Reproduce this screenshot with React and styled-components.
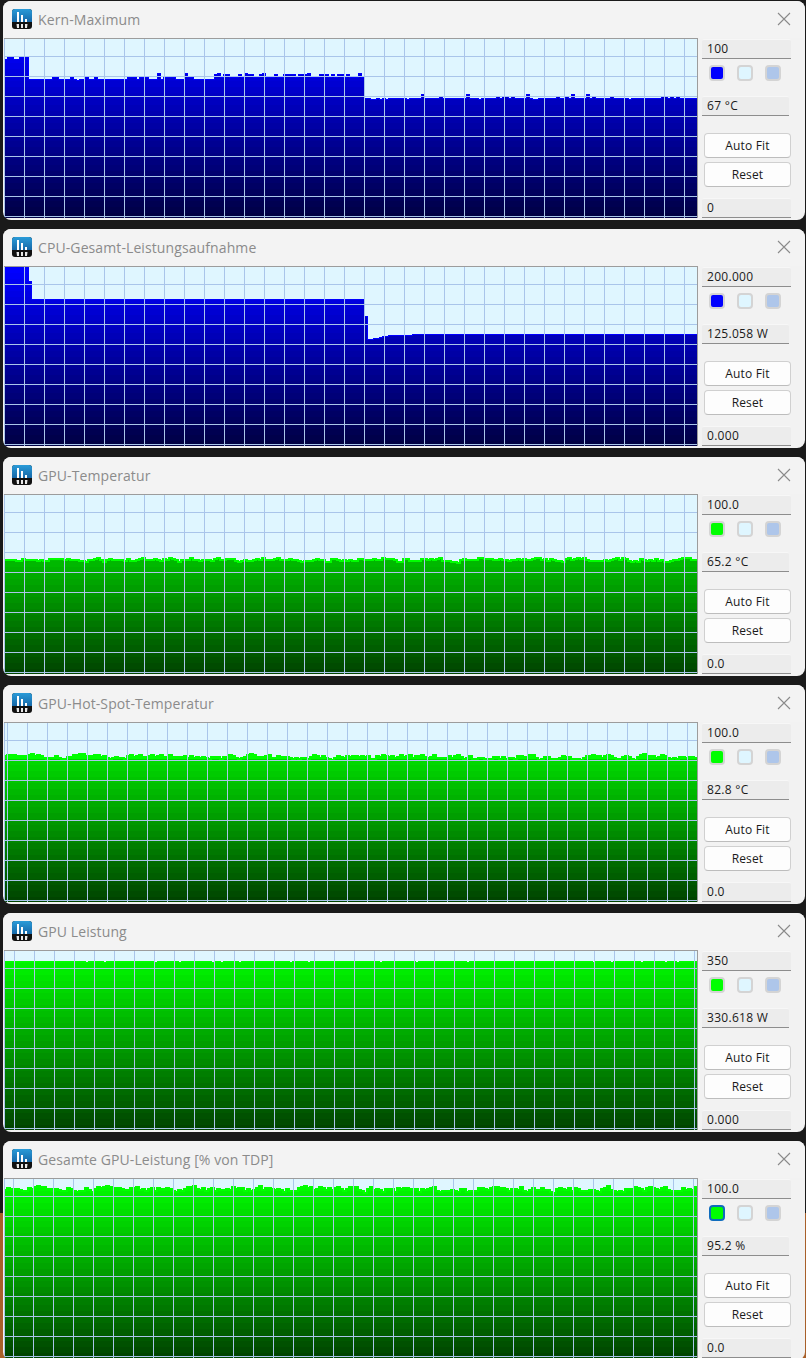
import React from 'react';
import styled, { createGlobalStyle } from 'styled-components';

const Global = createGlobalStyle`
  html, body { margin: 0; padding: 0; }
  body {
    width: 806px; height: 1358px; overflow: hidden;
    background: linear-gradient(#1a1a1a 1213px, #a8602a 1213px);
    font-family: "Open Sans", "Noto Sans", sans-serif;
  }
`;
const Page = styled.div`
  height: 1358px; overflow: hidden; padding: 1px 1px 0 3px; box-sizing: border-box;
  display: flex; flex-direction: column; gap: 9px;
`;
const Win = styled.section`
  flex: 0 0 219px; height: 219px; box-sizing: border-box; background: #f2f2f2;
  border-radius: 8px; overflow: hidden; display: flex; flex-direction: column;
`;
const TitleBar = styled.header`
  height: 37px; flex: 0 0 37px; box-sizing: border-box; background: #f3f3f3; display: flex; align-items: center;
  padding: 0 14px 1px 9px; gap: 6px;
`;
const Title = styled.h1`
  flex: 1; margin: 0; font-weight: 400; font-size: 14px; letter-spacing: 0.1px; color: #8b8b8b; white-space: nowrap;
`;
const Body = styled.div`display: flex; flex: 1; min-height: 0; align-items: flex-start;`;
const Plot = styled.div`
  width: 694px; height: 180px; box-sizing: border-box; background: #dff6ff; margin-left: 1px;
  border-top: 1px solid #9c9c9c; border-right: 1px solid #9c9c9c; flex: none;
  svg { display: block; }
`;
const Side = styled.aside`
  width: 90px; margin-left: 4px; display: flex; flex-direction: column; align-items: flex-start;
`;
const Field = styled.div`
  box-sizing: border-box; height: 20px; width: ${p => p.$w}px; margin-top: ${p => p.$mt || 0}px;
  background: #ececec; border-top: 1px solid #f7f7f7; border-bottom: 1px solid #8d8d8d;
  border-radius: 2px 2px 0 0; padding-left: 5px; line-height: 18px;
  font-size: 12px; letter-spacing: 0.3px; color: #1a1a1a; white-space: nowrap;
`;
const Swatches = styled.div`display: flex; gap: 12px; margin: 6px 0 0 7px;`;
const Swatch = styled.div`
  width: 16px; height: 16px; box-sizing: border-box; border-radius: 4px; background: ${p => p.$c};
  border: 2px solid ${p => p.$focus ? '#0f6cbd' : '#d4d4d4'};
`;
const Btn = styled.button`
  display: block; width: 87px; height: 25px; margin: ${p => p.$mt}px 0 0 2px; padding: 0;
  box-sizing: border-box; background: #fdfdfd; border: 1px solid #d0d0d0; border-bottom-color: #bdbdbd;
  border-radius: 4px; font: 400 12px "Open Sans", "Noto Sans", sans-serif; letter-spacing: 0.15px; color: #1a1a1a;
`;

const rng = seed => () => {
  seed |= 0; seed = (seed + 0x6d2b79f5) | 0;
  let t = Math.imul(seed ^ (seed >>> 15), 1 | seed);
  t = (t + Math.imul(t ^ (t >>> 7), 61 | t)) ^ t;
  return ((t ^ (t >>> 14)) >>> 0) / 4294967296;
};
const W = 693;
const H = 178;
const xs = []; for (let x = 0; x < W; x += 3) xs.push(x);
const near = (list, x) => list.some(v => x + 4 >= v && x + 4 < v + 3);

const bump1a = [52, 55, 70, 85, 94, 127, 130, 133, 139, 142, 145, 163, 166, 169, 172, 187, 190];
const spike1a = [157, 182];
const high1b = [214, 223, 226, 236, 245, 248, 258, 272, 283, 286, 289, 292, 297, 300, 303, 317, 320, 323, 329, 337, 340, 346];
const spike1b = [217, 243, 260, 305, 357];
const series = {
  kern: x => {
    const a = x + 4;
    if (a < 28) return near([4, 13, 16], x) ? 20 : 18;
    if (a < 213) { if (near(spike1a, x)) return 34; if (near(bump1a, x)) return 38; if (near([70, 76], x)) return 41; return 40; }
    if (a < 364) { if (near(spike1b, x)) return 34; if (near(high1b, x)) return 35; return 38; }
    if (near([419, 464, 524, 569, 584], x)) return 55;
    if (near([437, 494, 500, 503, 509, 554, 563, 590, 608, 660, 663, 668, 674], x)) return 57;
    if (near([370, 373, 378, 383, 404, 477, 532, 535, 626], x)) return 60;
    return 59;
  },
  cpu: x => {
    const a = x + 4;
    if (a < 27) return 0;
    if (a < 31) return 14;
    if (a < 364) return 32;
    if (a < 367) return 49;
    if (a < 373) return 72;
    if (a < 379) return 71;
    if (a < 382) return 70;
    if (a < 388) return 69;
    if (a < 412) return 68;
    return 67;
  },
};
const noisy = (seed, lo, hi) => {
  const r = rng(seed); const m = {};
  let cur = (lo + hi) / 2;
  xs.forEach(x => {
    cur = cur * 0.45 + (lo + r() * (hi - lo)) * 0.55;
    m[x] = Math.round(cur);
  });
  return x => m[x];
};
series.gpuT = noisy(11, 61, 67);
series.hot = noisy(29, 29, 37);
series.pow = (() => { const r = rng(5); const m = {}; xs.forEach(x => { m[x] = r() > 0.93 ? 11 : 10; }); return x => m[x]; })();
series.tdp = noisy(47, 5, 14);

function Chart({ id, kind, fn, offset, solidTo = 0, strokeW = 1 }) {
  const top = kind === 'blue' ? c => `rgb(0,0,${c})` : c => `rgb(0,${c},0)`;
  const bands = [];
  for (let y = 0; y < H; y += 6) {
    const c = y < solidTo ? 255 : Math.round(255 - (191 * y) / H);
    bands.push([y, c]);
  }
  const pts = xs.map(x => [x, fn(x)]);
  let line = '';
  pts.forEach(([x, y], i) => { line += i === 0 ? `M0 ${y}` : ` V${y}`; line += ` H${Math.min(x + 3, W)}`; });
  const fill = `${line} V${H + 1} H0 Z`;
  let grid = '';
  for (let x = offset; x < W; x += 20) grid += `M${x + 0.5} 0V${H + 1}`;
  for (let y = 17; y < H + 1; y += 20) grid += `M0 ${y + 0.5}H${W}`;
  grid += 'M0.5 0V179';
  const color = kind === 'blue' ? '#0000ff' : '#00ff00';
  return (
    <svg width={W} height={H + 1} viewBox={`0 0 ${W} ${H + 1}`} shapeRendering="crispEdges">
      <defs>
        <clipPath id={id}><path d={fill} /></clipPath>
      </defs>
      <g clipPath={`url(#${id})`}>
        {bands.map(([y, c]) => <rect key={y} x="0" y={y} width={W} height="6" fill={top(c)} />)}
      </g>
      <path d={line} transform="translate(0 0.5)" fill="none" stroke={color} strokeWidth={strokeW} />
      <path d={grid} fill="none" stroke="#a9c5ea" strokeWidth="1" />
    </svg>
  );
}

const AppIcon = () => (
  <svg width="20" height="20" viewBox="0 0 20 20" style={{ flex: 'none' }}>
    <defs>
      <linearGradient id="ico" x1="0" y1="0" x2="0" y2="1">
        <stop offset="0" stopColor="#2a9bd8" /><stop offset="1" stopColor="#1668a8" />
      </linearGradient>
    </defs>
    <rect width="20" height="20" rx="3" fill="#111" />
    <path d="M3 0h14a3 3 0 0 1 3 3v10H0V3a3 3 0 0 1 3-3z" fill="url(#ico)" />
    <path d="M5 3h2v10H5zM9 6h2v7H9zM13 10h2v3h-2z" fill="#fff" />
    <path d="M4.500 15h2.500v4H5zM9 15h2v4H9zM13 15h2.500l-.5 4h-2z" fill="#e8e8e8" />
  </svg>
);
const CloseIcon = () => (
  <svg width="14" height="14" viewBox="0 0 14 14" style={{ flex: 'none' }}>
    <path d="M1 1l12 12M13 1L1 13" stroke="#8a8a8a" strokeWidth="1.1" fill="none" />
  </svg>
);

const windows = [
  { id: 'a', title: 'Kern-Maximum', kind: 'blue', fn: series.kern, offset: 20, max: '100', cur: '67 °C', min: '0' },
  { id: 'b', title: 'CPU-Gesamt-Leistungsaufnahme', kind: 'blue', fn: series.cpu, offset: 20, max: '200.000', cur: '125.058 W', min: '0.000' },
  { id: 'c', title: 'GPU-Temperatur', kind: 'green', fn: series.gpuT, offset: 20, max: '100.0', cur: '65.2 °C', min: '0.0', strokeW: 2 },
  { id: 'd', title: 'GPU-Hot-Spot-Temperatur', kind: 'green', fn: series.hot, offset: 3, max: '100.0', cur: '82.8 °C', min: '0.0', solidTo: 36, strokeW: 2 },
  { id: 'e', title: 'GPU Leistung', kind: 'green', fn: series.pow, offset: 10, max: '350', cur: '330.618 W', min: '0.000', strokeW: 1 },
  { id: 'f', title: 'Gesamte GPU-Leistung [% von TDP]', kind: 'green', fn: series.tdp, offset: 9, max: '100.0', cur: '95.2 %', min: '0.0', strokeW: 2, focus: true },
];

export default function App() {
  return (
    <>
      <Global />
      <Page>
        {windows.map(w => (
          <Win key={w.id}>
            <TitleBar>
              <AppIcon />
              <Title>{w.title}</Title>
              <CloseIcon />
            </TitleBar>
            <Body>
              <Plot>
                <Chart id={`clip-${w.id}`} kind={w.kind} fn={w.fn} offset={w.offset} solidTo={w.solidTo} strokeW={w.strokeW} />
              </Plot>
              <Side>
                <Field $w={89} $mt={1}>{w.max}</Field>
                <Swatches>
                  <Swatch $c={w.kind === 'blue' ? '#0000ff' : '#00ff00'} $focus={w.focus} />
                  <Swatch $c="#dff6ff" />
                  <Swatch $c="#aec6ea" />
                </Swatches>
                <Field $w={87} $mt={15}>{w.cur}</Field>
                <Btn $mt={17}>Auto Fit</Btn>
                <Btn $mt={4}>Reset</Btn>
                <Field $w={89} $mt={11}>{w.min}</Field>
              </Side>
            </Body>
          </Win>
        ))}
      </Page>
    </>
  );
}
